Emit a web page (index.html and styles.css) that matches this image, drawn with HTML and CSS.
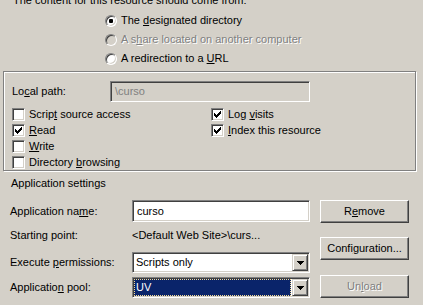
FILE: index.html
```html
<!DOCTYPE html>
<html>
<head>
<meta charset="utf-8">
<title>Properties</title>
<link rel="stylesheet" href="styles.css">
</head>
<body>
<div class="dlg">
  <div class="caption">The content for this resource should come from:</div>
  <div class="sources">
    <div class="opt"><span class="radio on"></span><span>The <u>d</u>esignated directory</span></div>
    <div class="opt disabled"><span class="radio"></span><span>A s<u>h</u>are located on another computer</span></div>
    <div class="opt"><span class="radio"></span><span>A redirection to a <u>U</u>RL</span></div>
  </div>

  <div class="frame">
    <div class="path-row">
      <span class="path-label">Lo<u>c</u>al path:</span>
      <div class="edit disabled path-edit">\curso</div>
    </div>
    <div class="checks">
      <div class="chk"><span class="box"></span><span>Scrip<u>t</u> source access</span></div>
      <div class="chk"><span class="box"><svg viewBox="0 0 11 11" width="11" height="11"><path d="M2 4h1v3h-1z M3 5h1v3h-1z M4 6h1v3h-1z M5 5h1v3h-1z M6 4h1v3h-1z M7 3h1v3h-1z M8 2h1v3h-1z" fill="#000"/></svg></span><span>Log <u>v</u>isits</span></div>
      <div class="chk"><span class="box"><svg viewBox="0 0 11 11" width="11" height="11"><path d="M2 4h1v3h-1z M3 5h1v3h-1z M4 6h1v3h-1z M5 5h1v3h-1z M6 4h1v3h-1z M7 3h1v3h-1z M8 2h1v3h-1z" fill="#000"/></svg></span><span><u>R</u>ead</span></div>
      <div class="chk"><span class="box"><svg viewBox="0 0 11 11" width="11" height="11"><path d="M2 4h1v3h-1z M3 5h1v3h-1z M4 6h1v3h-1z M5 5h1v3h-1z M6 4h1v3h-1z M7 3h1v3h-1z M8 2h1v3h-1z" fill="#000"/></svg></span><span><u>I</u>ndex this resource</span></div>
      <div class="chk"><span class="box"></span><span><u>W</u>rite</span></div>
      <div></div>
      <div class="chk"><span class="box"></span><span>Directory <u>b</u>rowsing</span></div>
    </div>
  </div>

  <div class="app-title">Application settings</div>

  <div class="app">
    <div class="fields">
      <div class="row row-name">
        <span class="lbl">Application na<u>m</u>e:</span>
        <div class="edit name-edit">curso</div>
      </div>
      <div class="row row-start">
        <span class="lbl">Starting point:</span>
        <span class="val">&lt;Default Web Site&gt;\curs...</span>
      </div>
      <div class="row row-exec">
        <span class="lbl">Execute <u>p</u>ermissions:</span>
        <div class="combo">
          <span class="combo-text">Scripts only</span>
          <span class="drop"><svg viewBox="0 0 7 4" width="7" height="4"><path d="M0 0h7v1h-7z M1 1h5v1h-5z M2 2h3v1h-3z M3 3h1v1h-1z" fill="#000"/></svg></span>
        </div>
      </div>
      <div class="row row-pool">
        <span class="lbl">Applicatio<u>n</u> pool:</span>
        <div class="combo">
          <span class="combo-text selected">UV</span>
          <span class="drop"><svg viewBox="0 0 7 4" width="7" height="4"><path d="M0 0h7v1h-7z M1 1h5v1h-5z M2 2h3v1h-3z M3 3h1v1h-1z" fill="#000"/></svg></span>
        </div>
      </div>
    </div>
    <div class="buttons">
      <div class="btn btn-remove">R<u>e</u>move</div>
      <div class="btn btn-config">Confi<u>g</u>uration...</div>
      <div class="btn btn-unload disabled">Un<u>l</u>oad</div>
    </div>
  </div>
</div>
</body>
</html>
```

FILE: styles.css
```css
html, body {
  margin: 0;
  padding: 0;
}
body {
  width: 423px;
  height: 305px;
  overflow: hidden;
  background: #d4d0c8;
  color: #000;
  font-family: "Liberation Sans", Arial, sans-serif;
  font-size: 11px;
  line-height: 13px;
}
u {
  text-decoration: underline;
  text-underline-offset: 1px;
}
.dlg {
  display: flex;
  flex-direction: column;
}
.caption {
  margin: -6px 0 0 13px;
  height: 13px;
  white-space: nowrap;
}
.sources {
  margin: 7px 0 0 105px;
  display: flex;
  flex-direction: column;
  gap: 6px;
}
.opt {
  display: flex;
  align-items: center;
  height: 13px;
  gap: 4px;
  white-space: nowrap;
}
.opt.disabled {
  color: #808080;
  text-shadow: 1px 1px 0 #fff;
}
.radio {
  position: relative;
  box-sizing: border-box;
  width: 12px;
  height: 12px;
  border-radius: 50%;
  border: 1px solid;
  border-color: #808080 #fff #fff #808080;
  box-shadow: inset 1px 1px 0 #404040, inset -1px -1px 0 #d4d0c8;
  background: #fff;
  flex: none;
}
.opt.disabled .radio {
  background: #d4d0c8;
}
.radio.on::after {
  content: "";
  position: absolute;
  left: 3px;
  top: 3px;
  width: 4px;
  height: 4px;
  border-radius: 1px;
  background: #000;
}

/* group frame */
.frame {
  box-sizing: border-box;
  margin: 6px 0 0 3px;
  width: 413px;
  height: 100px;
  border: 1px solid #808080;
  box-shadow: inset 1px 1px 0 #fff, 1px 1px 0 #fff;
  padding: 9px 0 0 8px;
}
.path-row {
  display: flex;
  align-items: center;
  height: 21px;
}
.path-label {
  width: 98px;
  flex: none;
}
.edit {
  box-sizing: border-box;
  height: 21px;
  border: 1px solid;
  border-color: #808080 #fff #fff #808080;
  box-shadow: inset 1px 1px 0 #404040, inset -1px -1px 0 #d4d0c8;
  background: #fff;
  padding: 0 4px;
  display: flex;
  align-items: center;
}
.edit.disabled {
  background: #d4d0c8;
  color: #808080;
}
.path-edit {
  width: 200px;
}
.checks {
  margin-top: 4px;
  display: grid;
  grid-template-columns: 199px auto;
  grid-auto-rows: 16px;
}
.chk {
  display: flex;
  align-items: center;
  white-space: nowrap;
}
.box {
  box-sizing: border-box;
  width: 13px;
  height: 13px;
  margin-right: 4px;
  flex: none;
  border: 1px solid;
  border-color: #808080 #fff #fff #808080;
  box-shadow: inset 1px 1px 0 #404040, inset -1px -1px 0 #d4d0c8;
  background: #fff;
}
.box svg {
  display: block;
  shape-rendering: crispEdges;
}

/* application settings */
.app-title {
  margin: 6px 0 0 11px;
  height: 13px;
}
.app {
  display: flex;
  margin: 10px 0 0 10px;
}
.fields {
  width: 300px;
  display: flex;
  flex-direction: column;
}
.row {
  display: flex;
  align-items: center;
  white-space: nowrap;
}
.lbl {
  width: 122px;
  flex: none;
}
.row-name {
  height: 22px;
}
.name-edit {
  width: 178px;
  height: 22px;
  padding-left: 4px;
}
.row-start {
  margin-top: 7px;
  height: 13px;
}
.row-exec {
  margin-top: 10px;
  height: 21px;
}
.row-pool {
  margin-top: 4px;
  height: 21px;
}
.combo {
  box-sizing: border-box;
  width: 178px;
  height: 21px;
  border: 1px solid;
  border-color: #808080 #fff #fff #808080;
  box-shadow: inset 1px 1px 0 #404040, inset -1px -1px 0 #d4d0c8;
  background: #fff;
  padding: 1px;
  display: flex;
}
.combo-text {
  flex: 1;
  box-sizing: border-box;
  display: flex;
  align-items: center;
  padding-left: 2px;
}
.combo-text.selected {
  background: #0a246a;
  color: #fff;
  border: 1px dotted #f5db95;
  padding-left: 1px;
  margin-right: 1px;
}
.drop {
  box-sizing: border-box;
  width: 16px;
  height: 17px;
  flex: none;
  border: 1px solid;
  border-color: #d4d0c8 #404040 #404040 #d4d0c8;
  box-shadow: inset 1px 1px 0 #fff, inset -1px -1px 0 #808080;
  background: #d4d0c8;
  display: flex;
  align-items: center;
  justify-content: center;
}
.drop svg {
  display: block;
  shape-rendering: crispEdges;
}
.buttons {
  margin-left: 10px;
  display: flex;
  flex-direction: column;
}
.btn {
  box-sizing: border-box;
  width: 89px;
  height: 23px;
  border: 1px solid;
  border-color: #fff #404040 #404040 #fff;
  box-shadow: inset -1px -1px 0 #808080;
  background: #d4d0c8;
  display: flex;
  align-items: center;
  justify-content: center;
  white-space: nowrap;
}
.btn-config {
  margin-top: 14px;
}
.btn-unload {
  margin-top: 15px;
}
.btn.disabled {
  color: #808080;
  text-shadow: 1px 1px 0 #fff;
}
```
